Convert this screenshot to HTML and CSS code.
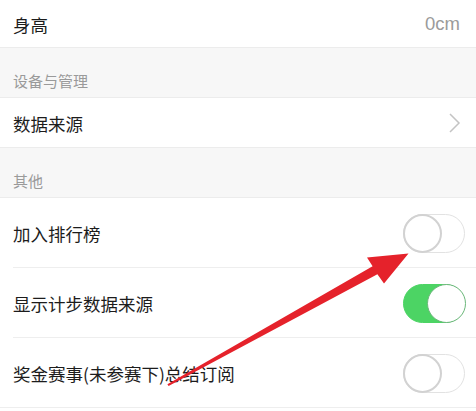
FILE: index.html
```html
<!DOCTYPE html>
<html lang="zh">
<head>
<meta charset="utf-8">
<link rel="stylesheet" href="styles.css">
</head>
<body>
<div class="page">
  <div class="row row-short first">
    <span class="label">身高</span>
    <span class="value">0cm</span>
  </div>
  <div class="header">设备与管理</div>
  <div class="row row-mid">
    <span class="label">数据来源</span>
    <svg class="chevron" width="13" height="22" viewBox="0 0 13 22"><path d="M2 2 L11 11 L2 20" fill="none" stroke="#c4c4c4" stroke-width="1.5"/></svg>
  </div>
  <div class="header">其他</div>
  <div class="group">
    <div class="row row-tall inset">
      <span class="label">加入排行榜</span>
      <span class="toggle"><span class="knob"></span></span>
    </div>
    <div class="row row-tall inset">
      <span class="label">显示计步数据来源</span>
      <span class="toggle on"><span class="knob"></span></span>
    </div>
    <div class="row row-tall inset last">
      <span class="label">奖金赛事(未参赛下)总结订阅</span>
      <span class="toggle"><span class="knob"></span></span>
    </div>
  </div>
  <svg class="arrow" width="476" height="411" viewBox="0 0 476 411">
    <polygon points="167.4,384.2 372.6,266.2 367,257.5 408.5,253.5 384,283.5 377.4,274.3 168.6,386" fill="#e5222b"/>
  </svg>
</div>
</body>
</html>
```
FILE: styles.css
```css
html, body {
  margin: 0;
  padding: 0;
  background: #ffffff;
}
.page {
  position: relative;
  width: 476px;
  height: 411px;
  overflow: hidden;
  font-family: "Noto Sans CJK SC", "Noto Sans", sans-serif;
  color: #1c1c1c;
}
.row {
  display: flex;
  align-items: center;
  justify-content: space-between;
  box-sizing: border-box;
  padding: 0 11px 0 13px;
  background: #ffffff;
}
.label {
  font-size: 17.5px;
  line-height: 1;
  padding-top: 2px;
}
.row-short {
  height: 48px;
  border-bottom: 1px solid #ececec;
}
.row-mid {
  height: 51px;
  border-top: 1px solid #ececec;
  border-bottom: 1px solid #ececec;
  padding-right: 15px;
}
.value {
  font-family: "Liberation Sans", Arial, sans-serif;
  font-size: 18.5px;
  color: #9b9b9b;
  padding-right: 5px;
}
.header {
  box-sizing: border-box;
  height: 49px;
  background: #f7f7f7;
  color: #9a9a9a;
  font-size: 15px;
  line-height: 1;
  padding: 25px 0 0 13px;
}
.group {
  border-top: 1px solid #ececec;
}
.row-tall {
  height: 70px;
  position: relative;
}
.row-tall::after {
  content: "";
  position: absolute;
  left: 13px;
  right: 0;
  bottom: 0;
  height: 1px;
  background: #eeeeee;
}
.row-tall.last::after {
  left: 0;
}
.toggle {
  position: relative;
  box-sizing: border-box;
  width: 62px;
  height: 39px;
  border-radius: 20px;
  border: 1.5px solid #e2e2e2;
  background: #ffffff;
  margin-top: 1px;
}
.knob {
  position: absolute;
  top: -1.5px;
  left: -1.5px;
  box-sizing: border-box;
  width: 39px;
  height: 39px;
  border-radius: 50%;
  border: 2px solid #d2d2d2;
  background: #ffffff;
}
.toggle.on {
  background: #4cd464;
  border-color: #4cd464;
}
.toggle.on .knob {
  left: auto;
  right: -1.5px;
  border: 1.5px solid #6bb77a;
}
.chevron {
  display: block;
}
.arrow {
  position: absolute;
  left: 0;
  top: 0;
  pointer-events: none;
}
```
